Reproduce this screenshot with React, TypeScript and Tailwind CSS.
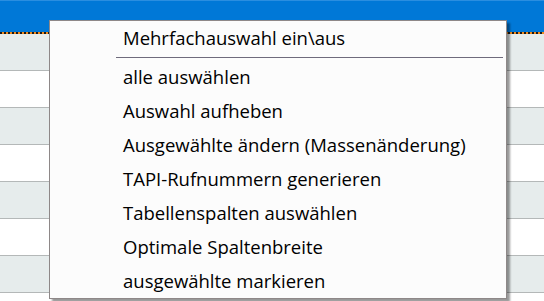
import React from "react";

const items = [
  "alle auswählen",
  "Auswahl aufheben",
  "Ausgewählte ändern (Massenänderung)",
  "TAPI-Rufnummern generieren",
  "Tabellenspalten auswählen",
  "Optimale Spaltenbreite",
  "ausgewählte markieren",
];

const rows = [0, 1, 2, 3, 4, 5, 6, 7];

export default function App() {
  return (
    <div className="relative w-[544px] h-[301px] overflow-hidden bg-white font-['Open_Sans','Noto_Sans',sans-serif]">
      {/* Grid behind the menu */}
      <div className="flex flex-col">
        <div className="h-[32px] bg-[#0078d7] border-t border-[#2a8ee0]" />
        <div className="h-[2px] bg-[repeating-linear-gradient(90deg,#1a1a1a_0_2px,#f08a1c_2px_4px)]" />
        {rows.map((i) => (
          <div
            key={i}
            className={`h-[37px] shrink-0 border-b border-[#b4b8b8] ${i % 2 === 0 ? "bg-[#e6ecec]" : "bg-white"}`}
          />
        ))}
      </div>

      {/* Context menu */}
      <div className="absolute left-[49px] top-[20px] w-[458px] border border-[#8e8888] bg-[#fcfcfc] shadow-[3px_3px_2px_rgba(0,0,0,0.4)]">
        <div className="flex h-[34px] items-center pl-[73px] text-[18.5px] text-black">
          Mehrfachauswahl ein\aus
        </div>
        <div className="ml-[66px] mr-[3px] my-[2px] h-px bg-[#6f6b7c]" />
        {items.map((label) => (
          <div key={label} className="flex h-[34px] items-center pl-[73px] text-[18.5px] text-black">
            {label}
          </div>
        ))}
      </div>
    </div>
  );
}
